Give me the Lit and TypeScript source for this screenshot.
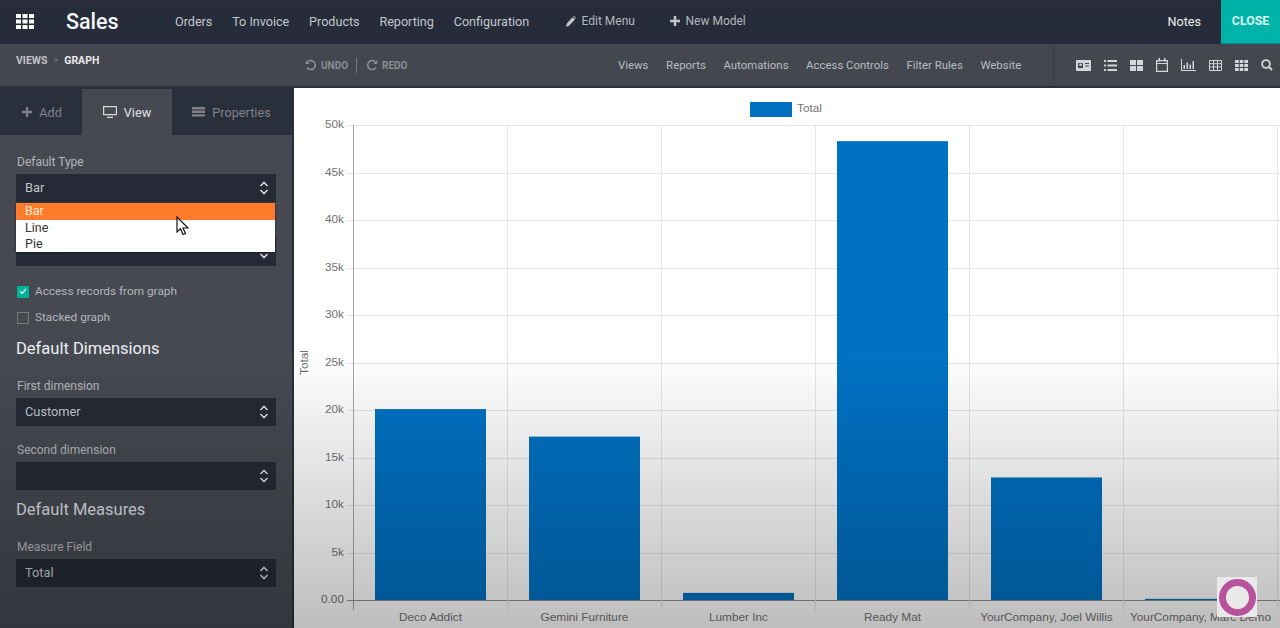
import { LitElement, html, css, svg } from "lit";
import { customElement } from "lit/decorators.js";

const bars = [
  { name: "Deco Addict", v: 20100 },
  { name: "Gemini Furniture", v: 17200 },
  { name: "Lumber Inc", v: 750 },
  { name: "Ready Mat", v: 48300 },
  { name: "YourCompany, Joel Willis", v: 12900 },
  { name: "YourCompany, Marc Demo", v: 120 },
];
const ticks = ["0.00", "5k", "10k", "15k", "20k", "25k", "30k", "35k", "40k", "45k", "50k"];
const X0 = 353, Y0 = 600, STEP = 154, H = 475;
const yOf = (v: number) => Y0 - (v / 50000) * H;

const chev = html`<svg class="chev" viewBox="0 0 10 16" width="10" height="16"><path d="M1.5 6 5 2.5 8.500 6M1.500 10 5 13.500 8.500 10" fill="none" stroke="#d5d7da" stroke-width="1.600"/></svg>`;

@customElement("app-root")
export class AppRoot extends LitElement {
  static styles = css`
    :host { display: block; position: relative; width: 1280px; height: 628px; overflow: hidden; font-family: Roboto, "Liberation Sans", sans-serif; background: #2a2f3c; }
    .top { height: 44px; background: #262c3a; display: flex; align-items: center; color: #c4c7cc; font-size: 12.600px; box-sizing: border-box; padding-bottom: 2px; box-shadow: inset 0 1px 0 #33293a; }
    .apps { margin-left: 16px; width: 18px; height: 15px; display: block; }
    .brand { margin-left: 32px; width: 109px; font-size: 21.500px; font-weight: 500; color: #f4f5f6; }
    .menu { display: flex; gap: 19.800px; width: 391px; }
    .tool { display: flex; align-items: center; gap: 5.500px; width: 104px; color: #b4b7bd; font-size: 12px; }
    .spacer { flex: 1; }
    .notes { color: #eceded; margin-right: 20px; }
    .close { align-self: flex-start; width: 59px; height: 44px; margin-bottom: -2px; padding-bottom: 2px; background: #00b3a8; color: #d8f4f1; font-weight: 700; font-size: 12.300px; display: flex; align-items: center; justify-content: center; box-sizing: border-box; border-bottom: 1px solid #008d88; }
    .sub { height: 42px; background: #444750; display: flex; color: #b4b7bc; position: relative; }
    .crumbs { width: 305px; box-sizing: border-box; padding: 10px 0 0 16px; font-size: 10.500px; font-weight: 700; color: #c0c3c8; display: flex; gap: 6px; }
    .crumbs b { color: #e7e8ea; font-weight: 700; }
    .crumbs i { font-style: normal; font-weight: 400; color: #80838a; font-size: 9px; line-height: 13px; }
    .undo { display: flex; align-items: center; width: 313px; font-size: 10px; font-weight: 700; color: #8b8e95; height: 42px; }
    .undo svg { margin-right: 4px; }
    .sep { width: 1px; height: 15px; background: #777a81; margin: 0 9px 0 8px; }
    .links { display: flex; gap: 17.600px; align-items: center; font-size: 11.400px; width: 435px; color: #b9bcc1; }
    .views { display: flex; align-items: center; border-left: 1px solid #383b43; box-sizing: border-box; height: 40px; padding: 2px 0 0 22px; gap: 13px; }
    .views svg { display: block; }
    .strip { height: 2px; background: #2d3039; }
    .main { display: flex; height: 540px; }
    .side { width: 294px; flex: none; background: #464952; position: relative; border-top: 1px solid #2a2f3c; border-right: 2px solid #2a2f3c; box-sizing: border-box; }
    .tabs { display: flex; height: 46px; background: #2a2f3c; padding-left: 2px; font-size: 12.700px; }
    .tab { display: flex; align-items: center; justify-content: center; gap: 7px; color: #7f828a; box-sizing: border-box; }
    .tab.on { background: #464952; color: #e2e3e6; }
    .body { padding: 18px 16px 0 16px; }
    .lab { height: 15px; line-height: 16px; padding-top: 1px; margin: 0 0 5px 1px; font-size: 12px; color: #b3b6bb; }
    .sel { height: 28px; background: #252a36; display: flex; align-items: center; justify-content: space-between; padding: 0 7px 0 9px; font-size: 12.800px; color: #c4c7cb; margin-bottom: 15px; }
    .sel span { padding-bottom: 2px; }
    .tight { margin-bottom: 12px; }
    .check { height: 26px; display: flex; align-items: center; gap: 6px; font-size: 11.800px; color: #b3b6bb; }
    .box { width: 12px; height: 12px; margin: 1px 0 0 1px; background: #00b49c; display: flex; align-items: center; justify-content: center; box-sizing: border-box; }
    .box.off { background: transparent; border: 1px solid #767980; }
    h3 { margin: 7px 0 16px; height: 24px; line-height: 24px; font-size: 16.500px; font-weight: 400; color: #eceef0; }
    h3.next { margin: 8px 0 16px; color: #dcdee1; }
    .drop { position: absolute; left: 16px; top: 114px; width: 259px; height: 49px; background: #fff; color: #333; font-size: 12.500px; box-shadow: 0 0 2px rgba(0, 0, 0, .6); }
    .drop div { height: 16px; line-height: 15px; padding-left: 9px; }
    .drop .hl { height: 17px; line-height: 16px; background: #ff7b2c; color: #ffe9d8; }
    .cursor { position: absolute; left: 176px; top: 127px; }
    .chart { flex: none; background: #fff; display: block; }
    .chart text { font-family: "Liberation Sans", Arial, sans-serif; font-size: 11.800px; fill: #727272; }
    .shade { position: absolute; left: 0; right: 0; top: 350px; bottom: 0; pointer-events: none; background: linear-gradient(rgba(0, 0, 0, 0), rgba(0, 0, 0, .26)); }
    .ring { position: absolute; left: 1217px; top: 577px; width: 40px; height: 40px; background: #e9e9e9; display: flex; align-items: center; justify-content: center; }
    .ring span { width: 23px; height: 23px; border: 7px solid #b8529b; border-radius: 50%; }
  `;

  private chart() {
    const gridH = ticks.map((_, i) => Math.round(Y0 - i * 47.5) + 0.5);
    return html`<svg class="chart" width="986" height="540" viewBox="294 88 986 540">
      <rect x="750" y="102" width="42" height="15" fill="#0070c0" />
      <text x="797" y="112">Total</text>
      ${gridH.map((y, i) => svg`<line x1="347" x2="1280" y1=${y} y2=${y} stroke=${i === 0 ? "#8f8f8f" : "#e6e6e6"} />
        <text x="344" y=${y + 2.5} text-anchor="end">${ticks[i]}</text>`)}
      ${[0, 1, 2, 3, 4, 5, 6].map((i) => svg`<line x1=${X0 + i * STEP + 0.5} x2=${X0 + i * STEP + 0.5} y1="125" y2="610" stroke=${i === 0 ? "#a5a5a5" : "#e6e6e6"} />`)}
      ${bars.map((b, i) => svg`<rect x=${X0 + 22 + i * STEP} y=${yOf(b.v)} width="111" height=${Y0 - yOf(b.v)} fill="#0072c4" />
        <text x=${X0 + 77.5 + i * STEP} y="621" text-anchor="middle">${b.name}</text>`)}
      <text transform="translate(308 375) rotate(-90)" x="0" y="0">Total</text>
    </svg>`;
  }

  render() {
    return html`
      <div class="top">
        <svg class="apps" viewBox="0 0 18 15"><path fill="#fff" d="M0 0h5v4H0zM6.500 0h5v4h-5zM13 0h5v4h-5zM0 5.500h5v4H0zM6.500 5.500h5v4h-5zM13 5.500h5v4h-5zM0 11h5v4H0zM6.500 11h5v4h-5zM13 11h5v4h-5z"/></svg>
        <div class="brand">Sales</div>
        <div class="menu"><span>Orders</span><span>To Invoice</span><span>Products</span><span>Reporting</span><span>Configuration</span></div>
        <div class="tool"><svg width="10" height="11" viewBox="0 0 10 11"><path fill="#c4c7cc" d="M0 11l.8-3.400L6.500 1.200 9 3.500 3 9.800zM7.200.5 8 0l2 2-.4.800z"/></svg>Edit Menu</div>
        <div class="tool"><svg width="10" height="10" viewBox="0 0 10 10"><path fill="#c4c7cc" d="M3.800 0h2.400v3.800H10v2.400H6.200V10H3.800V6.200H0V3.800h3.800z"/></svg>New Model</div>
        <div class="spacer"></div>
        <div class="notes">Notes</div>
        <div class="close">CLOSE</div>
      </div>
      <div class="sub">
        <div class="crumbs"><span>VIEWS</span><i>&gt;</i><b>GRAPH</b></div>
        <div class="undo">
          <svg width="12" height="12" viewBox="0 0 12 12"><path d="M3 2.500A4.500 4.500 0 1 1 2 8.500" fill="none" stroke="#8b8e95" stroke-width="1.600"/><path d="M.8 1v4h4z" fill="#8b8e95"/></svg>UNDO
          <span class="sep"></span>
          <svg width="12" height="12" viewBox="0 0 12 12"><path d="M9 2.500A4.500 4.500 0 1 0 10 8.500" fill="none" stroke="#8b8e95" stroke-width="1.600"/><path d="M11.200 1v4h-4z" fill="#8b8e95"/></svg>REDO
        </div>
        <div class="links"><span>Views</span><span>Reports</span><span>Automations</span><span>Access Controls</span><span>Filter Rules</span><span>Website</span></div>
        <div class="views">
          <svg width="15" height="11" viewBox="0 0 15 11"><path fill="#d4d6d9" fill-rule="evenodd" d="M0 0h15v11H0zM2 3v5h5V3zM9 3v1h4V3zM9 5.500v1h4v-1z"/><circle cx="4.500" cy="4.800" r="1.300" fill="#d4d6d9"/></svg>
          <svg width="13" height="11" viewBox="0 0 13 11"><path fill="#d4d6d9" d="M0 0h2v2H0zM3.500 0H13v2H3.500zM0 4.500h2v2H0zM3.500 4.500H13v2H3.500zM0 9h2v2H0zM3.500 9H13v2H3.500z"/></svg>
          <svg width="13" height="11" viewBox="0 0 13 11"><path fill="#d4d6d9" d="M0 0h6v5H0zM7 0h6v5H7zM0 6h6v5H0zM7 6h6v5H7z"/></svg>
          <svg width="12" height="14" viewBox="0 0 12 14"><path fill="none" stroke="#d4d6d9" stroke-width="1.200" d="M.6 2.600h10.800v10.800H.6zM.6 5.500h10.800"/><path fill="#d4d6d9" d="M2.500 0h1.500v3.500H2.500zM8 0h1.500v3.500H8z"/></svg>
          <svg width="15" height="12" viewBox="0 0 15 12"><path fill="#d4d6d9" d="M0 0h1v11h14v1H0zM2.500 6h1.500v4H2.500zM5.500 3.500H7V10H5.500zM8.500 5.500H10V10H8.500zM11.500 2H13v8h-1.500z"/></svg>
          <svg width="13" height="11" viewBox="0 0 13 11"><path fill="none" stroke="#d4d6d9" d="M.5.500h12v10H.500zM.5 3.700h12M.5 7h12M4.500.5v10M8.500.5v10"/></svg>
          <svg width="13" height="11" viewBox="0 0 13 11"><path fill="#d4d6d9" d="M0 0h3.700v3H0zM4.700 0h3.600v3H4.700zM9.300 0H13v3H9.300zM0 4h3.700v3H0zM4.700 4h3.600v3H4.700zM9.300 4H13v3H9.300zM0 8h3.700v3H0zM4.700 8h3.600v3H4.700zM9.300 8H13v3H9.300z"/></svg>
          <svg width="12" height="12" viewBox="0 0 12 12"><circle cx="5" cy="5" r="3.900" fill="none" stroke="#d4d6d9" stroke-width="1.800"/><path d="M7.800 7.800 11 11" stroke="#d4d6d9" stroke-width="2"/></svg>
        </div>
      </div>
      <div class="strip"></div>
      <div class="main">
        <div class="side">
          <div class="tabs">
            <div class="tab" style="width:80px"><svg width="10" height="10" viewBox="0 0 10 10"><path fill="#7f828a" d="M3.800 0h2.400v3.800H10v2.400H6.200V10H3.800V6.200H0V3.800h3.800z"/></svg>Add</div>
            <div class="tab on" style="width:90px"><svg width="14" height="12" viewBox="0 0 14 12"><path fill="none" stroke="#d5d7da" stroke-width="1.200" d="M.6.600h12.800v8H.6zM4 11.400h6"/></svg>View</div>
            <div class="tab" style="width:119px"><svg width="13" height="11" viewBox="0 0 13 11"><path fill="#7f828a" d="M0 0h13v2.400H0zM0 3.600h13V6H0zM0 7.200h13v2.400H0z"/></svg>Properties</div>
          </div>
          <div class="body">
            <div class="lab">Default Type</div>
            <div class="sel"><span>Bar</span>${chev}</div>
            <div class="lab"></div>
            <div class="sel tight"><span></span>${chev}</div>
            <div class="check"><span class="box"><svg width="8" height="7" viewBox="0 0 8 7"><path d="M1 3.500 3 5.500 7 1" fill="none" stroke="#e8fff9" stroke-width="1.200"/></svg></span>Access records from graph</div>
            <div class="check"><span class="box off"></span>Stacked graph</div>
            <h3>Default Dimensions</h3>
            <div class="lab">First dimension</div>
            <div class="sel"><span>Customer</span>${chev}</div>
            <div class="lab">Second dimension</div>
            <div class="sel" style="margin-bottom:0"><span></span>${chev}</div>
            <h3 class="next">Default Measures</h3>
            <div class="lab">Measure Field</div>
            <div class="sel"><span>Total</span>${chev}</div>
          </div>
          <div class="drop"><div class="hl">Bar</div><div>Line</div><div>Pie</div></div>
          <svg class="cursor" width="14" height="20" viewBox="0 0 14 20"><path d="M1 1v15l3.500-3.200L7 18.500l2.500-1L7 12h5z" fill="#fff" stroke="#111" stroke-width="1.200"/></svg>
        </div>
        ${this.chart()}
      </div>
      <div class="shade"></div>
      <div class="ring"><span></span></div>
    `;
  }
}
